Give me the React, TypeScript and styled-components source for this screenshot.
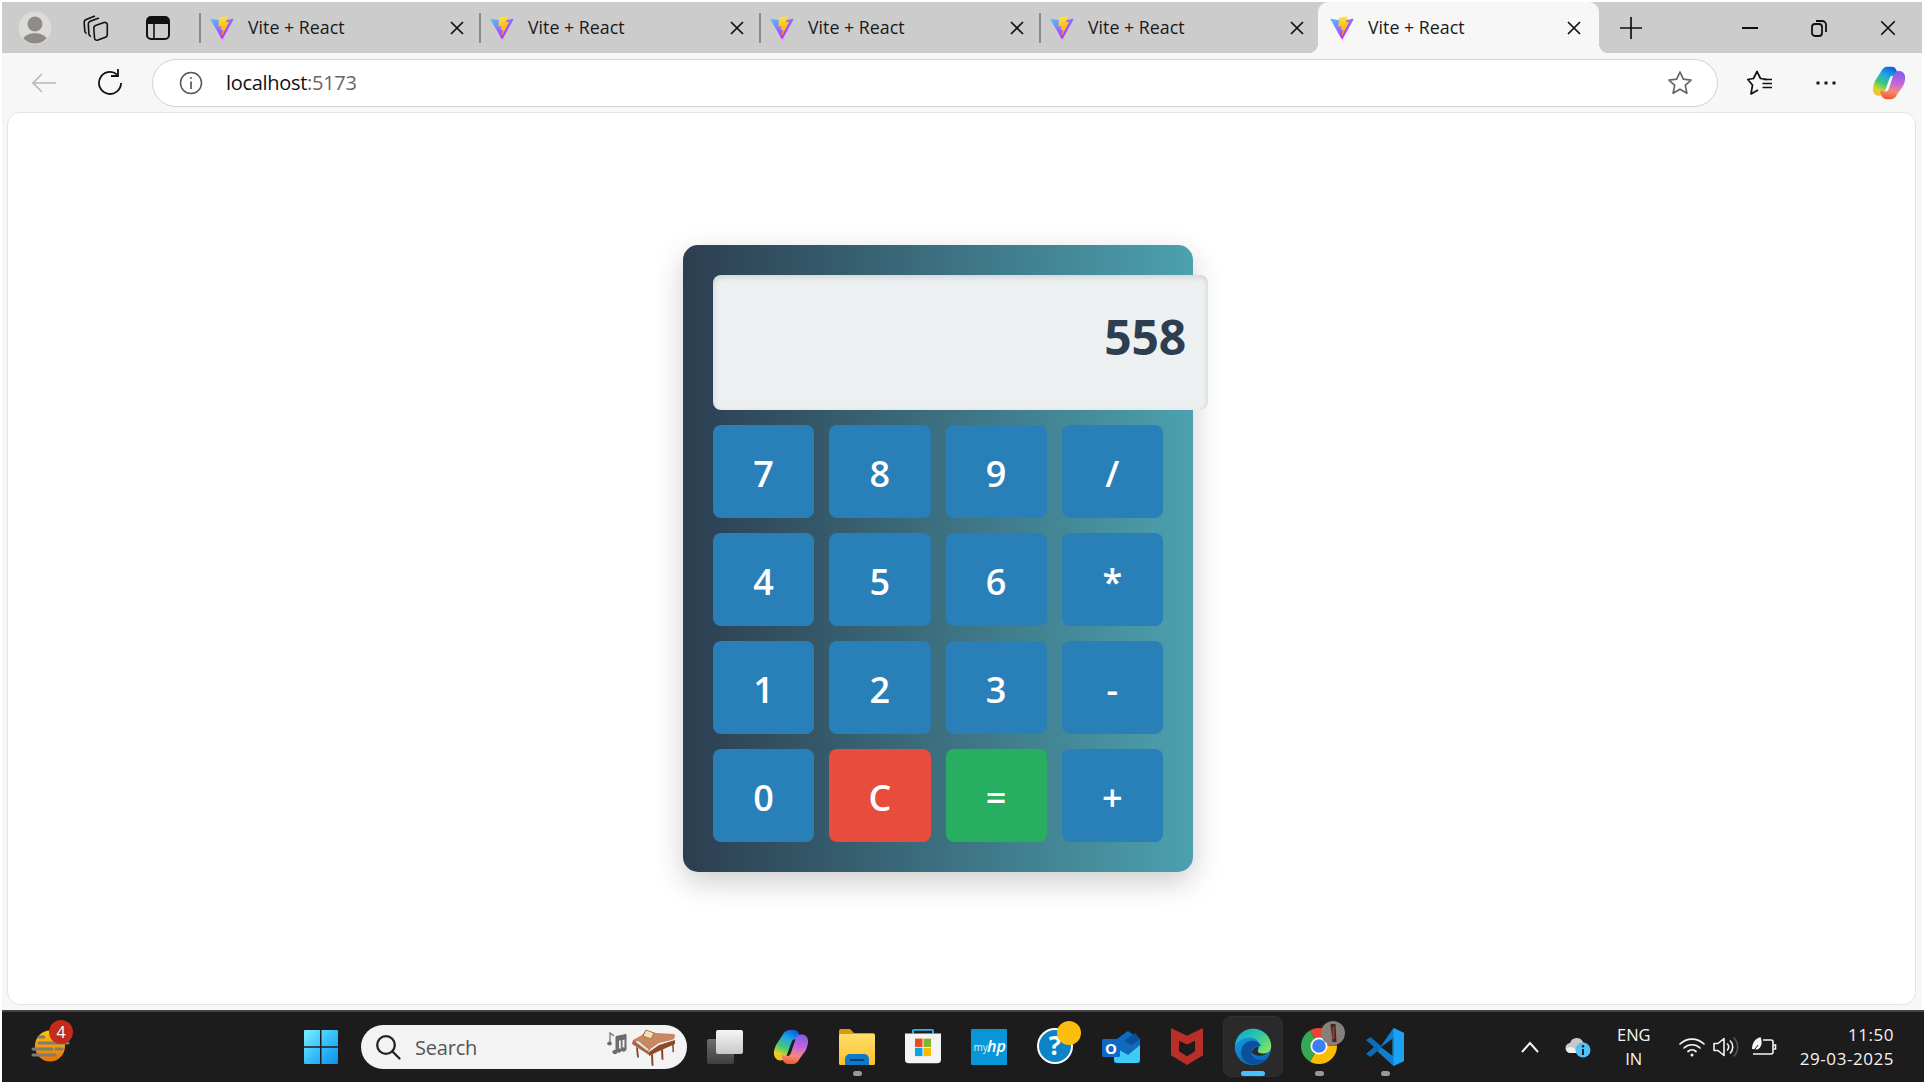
import React, { useId } from "react";
import styled, { createGlobalStyle } from "styled-components";

const Global = createGlobalStyle`
  html, body { margin: 0; padding: 0; background: #fff; }
  body { width: 1924px; height: 1084px; overflow: hidden; font-family: "Open Sans", "Noto Sans", sans-serif; }
  * { box-sizing: border-box; }
`;

const Frame = styled.div`
  width: 1924px; height: 1084px; padding: 2px 0 2px 2px;
  display: flex; flex-direction: column; background: #fff;
`;

/* ---------- tab strip ---------- */
const TabStrip = styled.div`
  height: 51px; flex: none; display: flex; align-items: stretch; background: #cccccc; width: 1920px;
`;
const StripTools = styled.div`
  flex: 0 0 196px; display: flex; align-items: center;
`;
const Slot = styled.div<{ $w: number }>`
  flex: 0 0 ${(p) => p.$w}px; display: flex; align-items: center; justify-content: center;
`;
const Tab = styled.div<{ $active?: boolean }>`
  position: relative; flex: 0 0 ${(p) => (p.$active ? 281 : 280)}px;
  display: flex; align-items: center; padding: 0 ${(p) => (p.$active ? 17 : 13)}px 0 1px;
  color: #1a1a1a; font-size: 17.8px;
  background: ${(p) => (p.$active ? "#f7f7f7" : "transparent")};
  border-radius: 10px 10px 0 0;
  ${(p) =>
    p.$active
      ? `&::before, &::after { content: ""; position: absolute; bottom: 0; width: 10px; height: 10px; }
         &::before { left: -10px; background: radial-gradient(circle at 0 0, #ccc 10px, #f7f7f7 10.5px); }
         &::after { right: -10px; background: radial-gradient(circle at 100% 0, #ccc 10px, #f7f7f7 10.5px); }`
      : ""}
`;
const TabSep = styled.span<{ $hidden?: boolean }>`
  flex: none; width: 2px; height: 30px; background: ${(p) => (p.$hidden ? "transparent" : "#8a8a8a")}; margin-right: 9px;
`;
const TabTitle = styled.span`
  margin-left: 14px; padding-bottom: 2px; flex: 1; white-space: nowrap;
`;
const Spacer = styled.div`
  flex: 1;
`;
const WinControls = styled.div`
  display: flex; align-items: center;
`;

/* ---------- toolbar ---------- */
const Body = styled.div`
  flex: 1; min-height: 0; display: flex; flex-direction: column; background: #f7f7f7; width: 1920px;
`;
const Toolbar = styled.div`
  height: 59px; flex: none; display: flex; align-items: center;
`;
const Address = styled.div`
  flex: 0 0 1566px; height: 48px; margin: 0 9px 0 18px; padding: 0 24px 0 26px;
  display: flex; align-items: center; background: #fff;
  border: 1.5px solid #d2d2d2; border-radius: 24px;
`;
const Url = styled.div`
  margin-left: 23px; flex: 1; font-size: 20px; color: #111; letter-spacing: -0.3px; font-family: "Open Sans", sans-serif;
`;
const Port = styled.span`
  color: #666;
`;

/* ---------- page ---------- */
const PageWrap = styled.div`
  flex: 1; min-height: 0; padding: 0 6px 5px 5px; display: flex;
`;
const Page = styled.main`
  flex: 1; background: #fff; border: 1px solid #e4e4e4; border-radius: 13px;
  display: flex; align-items: center; justify-content: center; padding: 0 47px 1px 0;
`;
const Calculator = styled.div`
  width: 510px; height: 627px; padding: 30px; border-radius: 15px;
  background: linear-gradient(to right, #2c3e50, #4ca1af);
  box-shadow: 0 10px 30px rgba(0, 0, 0, 0.2);
  display: flex; flex-direction: column; gap: 15px;
`;
const Display = styled.div`
  flex: none; width: 495px; height: 135px; padding: 0 22px 12px 20px;
  display: flex; align-items: center; justify-content: flex-end;
  background: #ecf0f1; border-radius: 8px; color: #2c3e50;
  font-family: "Open Sans", sans-serif; font-size: 48px; font-weight: 700; letter-spacing: -0.2px;
  box-shadow: inset 0 2px 6px rgba(0, 0, 0, 0.13);
`;
const Keys = styled.div`
  flex: 1; display: grid; grid-template-columns: repeat(4, 1fr); grid-auto-rows: 93px; gap: 15px;
`;
const Key = styled.button<{ $bg: string }>`
  border: 0; border-radius: 8px; padding: 5px 0 0; color: #fff; background: ${(p) => p.$bg};
  font-family: "Open Sans", sans-serif; font-size: 36px; font-weight: 600;
  display: flex; align-items: center; justify-content: center;
`;

/* ---------- taskbar ---------- */
const Taskbar = styled.footer`
  height: 72px; flex: none; width: 1922px; border-top: 2px solid #444; background: #1c1c1c;
  display: flex; align-items: center; color: #fff;
`;
const WeatherSlot = styled.div`
  flex: 0 0 286px; display: flex; align-items: center; padding-left: 27px;
`;
const Search = styled.div`
  flex: 0 0 326px; height: 44px; margin: 0 5px 0 7px; padding: 0 8px 0 14px; border-radius: 22px; background: #f3f3f3;
  display: flex; align-items: center; color: #555; font-size: 20px;
`;
const SearchLabel = styled.span`
  flex: 1; margin-left: 14px; letter-spacing: -0.2px;
`;
const TaskItem = styled.div<{ $active?: boolean; $dot?: boolean }>`
  position: relative; flex: 0 0 66px; height: 70px; display: flex; align-items: center; justify-content: center;
  padding-bottom: 1px;
  & > svg { position: relative; }
  ${(p) =>
    p.$active
      ? `&::before { content: ""; position: absolute; left: 3px; right: 3px; top: 4px; bottom: 5px; border-radius: 8px; background: #2a2a2a; border: 1px solid #303030; }
         &::after { content: ""; position: absolute; left: 21px; width: 24px; height: 5px; bottom: 6px; border-radius: 3px; background: #47c1ff; }`
      : p.$dot
      ? `&::after { content: ""; position: absolute; left: 29px; width: 9px; height: 5px; bottom: 6px; border-radius: 3px; background: #999; }`
      : ""}
`;
const TrayText = styled.div`
  font-size: 16.5px; line-height: 24px; text-align: center; color: #f4f4f4; flex: none;
`;
const Clock = styled.div`
  flex: none; margin: 0 30px 0 16px; font-size: 17px; line-height: 24px; text-align: right; color: #f4f4f4; letter-spacing: 0.55px;
`;
const SvgText = styled.text<{ $size: number; $w?: number; $i?: boolean }>`
  font-family: "Open Sans", sans-serif; font-size: ${(p) => p.$size}px; font-weight: ${(p) => p.$w ?? 400};
  font-style: ${(p) => (p.$i ? "italic" : "normal")};
`;

/* ---------- icons ---------- */
type S = { size?: number };
const Vite = ({ size = 24 }: S) => {
  const id = useId();
  return (
    <svg width={size} height={size} viewBox="0 0 410 404" fill="none">
      <defs>
        <linearGradient id={id + "a"} x1="6" y1="33" x2="235" y2="344" gradientUnits="userSpaceOnUse">
          <stop stopColor="#41D1FF" /><stop offset="1" stopColor="#BD34FE" />
        </linearGradient>
        <linearGradient id={id + "b"} x1="194" y1="8" x2="236" y2="292" gradientUnits="userSpaceOnUse">
          <stop stopColor="#FFEA83" /><stop offset=".08" stopColor="#FFDD35" /><stop offset="1" stopColor="#FFA800" />
        </linearGradient>
      </defs>
      <path fill={`url(#${id}a)`} d="M399.641 59.5246L215.643 388.545C211.844 395.338 202.084 395.378 198.228 388.618L10.5817 59.5563C6.38087 52.1896 12.6802 43.2665 21.0281 44.7586L205.223 77.6824C206.398 77.8924 207.601 77.8904 208.776 77.6763L389.119 44.8058C397.439 43.2894 403.768 52.1434 399.641 59.5246Z" />
      <path fill={`url(#${id}b)`} d="M292.965 1.5744L156.801 28.2552C154.563 28.6937 152.906 30.5903 152.771 32.8664L144.395 174.33C144.198 177.662 147.258 180.248 150.51 179.498L188.42 170.749C191.967 169.931 195.172 173.055 194.443 176.622L183.18 231.775C182.422 235.487 185.907 238.661 189.532 237.56L212.947 230.446C216.577 229.344 220.065 232.527 219.297 236.242L201.398 322.875C200.278 328.294 207.486 331.249 210.492 326.603L212.5 323.5L323.454 102.072C325.312 98.3645 322.108 94.137 318.036 94.9228L279.014 102.454C275.347 103.161 272.227 99.746 273.262 96.1583L298.731 7.86689C299.767 4.27314 296.636 0.855181 292.965 1.5744Z" />
    </svg>
  );
};
const Cross = ({ size = 16, w = 1.7 }: S & { w?: number }) => (
  <svg width={size} height={size} viewBox="0 0 16 16"><path d="M2 2L14 14M14 2L2 14" stroke="#111" strokeWidth={w} fill="none" /></svg>
);
const Avatar = () => (
  <svg width="34" height="34" viewBox="0 0 34 34">
    <circle cx="17" cy="17" r="16.5" fill="#dcdbd8" />
    <clipPath id="avc"><circle cx="17" cy="17" r="15.5" /></clipPath>
    <g clipPath="url(#avc)" fill="#8f8b86">
      <circle cx="17" cy="13" r="7.5" />
      <ellipse cx="17" cy="31" rx="13" ry="9" />
    </g>
  </svg>
);
const Collections = () => (
  <svg width="28" height="28" viewBox="0 0 28 28" fill="none" stroke="#111" strokeWidth="1.6" strokeLinejoin="round">
    <path d="M13.500 11.500L22 8.500C24 8 25.300 9 25.300 10.800V20.500C25.300 22 24.700 22.800 23.400 23.300L16 26C14 26.600 12.700 25.600 12.500 24L11.800 14C11.700 12.700 12.300 12 13.500 11.500Z" />
    <path d="M9 22.500C7.600 22 7 21 6.900 20L6.300 10C6.200 8.600 7 7.700 8.200 7.200L17 4" />
    <path d="M4.700 19.500C3.400 19 2.900 18 2.800 17L2.200 8.500C2.100 7 3 6 4.200 5.600L13 2" />
  </svg>
);
const PanelIcon = () => (
  <svg width="24" height="24" viewBox="0 0 24 24">
    <rect x="1" y="1" width="22" height="22" rx="4" fill="none" stroke="#111" strokeWidth="2" />
    <path d="M1 5a4 4 0 0 1 4-4h14a4 4 0 0 1 4 4v3H1z" fill="#111" />
    <path d="M8 8v15" stroke="#111" strokeWidth="1.6" />
  </svg>
);
const Plus = () => (
  <svg width="22" height="22" viewBox="0 0 22 22"><path d="M11 0V22M0 11H22" stroke="#111" strokeWidth="1.7" /></svg>
);
const Minimize = () => (
  <svg width="16" height="4" viewBox="0 0 16 4"><path d="M0 2H16" stroke="#111" strokeWidth="2" /></svg>
);
const Restore = () => (
  <svg width="16" height="18" viewBox="0 0 16 18" fill="none" stroke="#111" strokeWidth="1.8">
    <rect x="1" y="5" width="10" height="12" rx="3" />
    <path d="M5 2h6a4 4 0 0 1 4 4v7" />
  </svg>
);
const Back = () => (
  <svg width="26" height="22" viewBox="0 0 26 22" fill="none" stroke="#b9b9b9" strokeWidth="1.7"><path d="M25 11H2M11 2L2 11L11 20" /></svg>
);
const Reload = () => (
  <svg width="26" height="28" viewBox="0 0 26 28" fill="none" stroke="#111" strokeWidth="1.8">
    <path d="M20 5.5A11 11 0 1 0 24 14" />
    <path d="M21 0V7H14" />
  </svg>
);
const Info = () => (
  <svg width="24" height="24" viewBox="0 0 24 24" fill="none" stroke="#555" strokeWidth="1.5">
    <circle cx="12" cy="12" r="10.5" />
    <path d="M12 10.5V18" strokeWidth="1.7" />
    <circle cx="12" cy="7" r="1" fill="#555" stroke="none" />
  </svg>
);
const Star = () => (
  <svg width="26" height="26" viewBox="0 0 26 26" fill="none" stroke="#666" strokeWidth="1.7" strokeLinejoin="round">
    <path d="M13 2l3.3 7.2 7.7.9-5.7 5.3 1.6 7.8L13 19.2l-6.9 4 1.6-7.8L2 10.1l7.7-.9z" />
  </svg>
);
const Favorites = () => (
  <svg width="26" height="26" viewBox="0 0 26 26" fill="none" stroke="#111" strokeWidth="1.7" strokeLinejoin="round">
    <path d="M20 9.500L13.500 8.500L10 1.500L6.500 8.500L0.800 9.500L5.500 15L4 24L11 20" />
    <path d="M16.500 9.500H25M15.500 13.500H25M15.500 17.500H25" />
  </svg>
);
const Dots = () => (
  <svg width="20" height="4" viewBox="0 0 20 4" fill="#222"><circle cx="2" cy="2" r="1.8" /><circle cx="10" cy="2" r="1.8" /><circle cx="18" cy="2" r="1.8" /></svg>
);
const Copilot = ({ size = 34 }: S) => {
  const id = useId();
  return (
    <svg width={size} height={size} viewBox="0 0 40 40">
      <defs>
        <linearGradient id={id + "l"} x1="0.7" y1="0" x2="0.25" y2="1">
          <stop offset="0" stopColor="#0c5fd6" /><stop offset=".3" stopColor="#1fa6e8" /><stop offset=".6" stopColor="#3fc878" /><stop offset=".85" stopColor="#e6d22a" /><stop offset="1" stopColor="#f0c020" />
        </linearGradient>
        <linearGradient id={id + "r"} x1="0.5" y1="0" x2="0.4" y2="1">
          <stop offset="0" stopColor="#7d5ee8" /><stop offset=".4" stopColor="#c562e0" /><stop offset=".72" stopColor="#f58a7a" /><stop offset="1" stopColor="#ee5a2a" />
        </linearGradient>
      </defs>
      <path fill={`url(#${id}l)`} d="M11 6C12 3.5 15 1 18 1h5c3 0 5 1.5 6 4.5l2.5 7-7-1c-2 0-3 1-4 3.5L15 30c-1 3-3.5 5-7 5-4 0-7-3.5-7-8 0-3 1-6 2.5-9.5z" />
      <path fill={`url(#${id}r)`} d="M29 34c-1 3-4 5-7 5h-5c-3 0-5-1.5-6-4.5L9 29l7 1c2 0 3-1 4-3.5L25 11c1-2.5 3-5 7-5 4.500 0 7 3.500 7 8 0 3-1 6-2.500 9.500z" />
    </svg>
  );
};
const Weather = () => (
  <svg width="62" height="62" viewBox="0 0 62 62">
    <defs>
      <linearGradient id="wx" x1="0" y1="0" x2="0" y2="1"><stop offset="0" stopColor="#ffc800" /><stop offset="1" stopColor="#e87200" /></linearGradient>
    </defs>
    <ellipse cx="21" cy="30" rx="15" ry="15.500" fill="url(#wx)" />
    <g stroke="#7c7c7c" strokeWidth="3" strokeLinecap="round">
      <path d="M10 21H15M10 27H39M4 33H23M27 33H33M4 39H26" />
    </g>
    <circle cx="32" cy="16" r="12" fill="#c42b1c" />
    <SvgText $size={16} x="32" y="22" textAnchor="middle" fill="#fff">4</SvgText>
  </svg>
);
const StartIcon = () => (
  <svg width="36" height="36" viewBox="0 0 36 36">
    <defs>
      <linearGradient id="st" x1="0" y1="0" x2="1" y2="1"><stop offset="0" stopColor="#7cf0ff" /><stop offset=".5" stopColor="#38c0fb" /><stop offset="1" stopColor="#0b8fef" /></linearGradient>
    </defs>
    <path fill="url(#st)" d="M1 2a1 1 0 0 1 1-1h15v16.300H1zM18.500 1H34a1 1 0 0 1 1 1v15.300H18.500zM1 18.700h16V35H2a1 1 0 0 1-1-1zM18.500 18.700H35V34a1 1 0 0 1-1 1H18.500z" />
  </svg>
);
const SearchGlass = () => (
  <svg width="26" height="26" viewBox="0 0 26 26" fill="none" stroke="#222" strokeWidth="2.3"><circle cx="11" cy="11" r="8.800" /><path d="M17.500 17.500L24.500 24.500" strokeLinecap="round" /></svg>
);
const Piano = () => (
  <svg width="72" height="40" viewBox="0 0 72 40">
    <g fill="#6b6b6b" stroke="#6b6b6b" strokeWidth="1">
      <path d="M3 16V6l4 3" fill="none" strokeWidth="1.200" /><ellipse cx="2.500" cy="16.500" rx="2" ry="1.500" />
      <path d="M9 9.500l10-2v15l-1 .5V12l-8 1.500V24h-1z" /><path d="M11.500 13v11h-.8V13zM15 12v11h-.7V12z" />
      <ellipse cx="8" cy="25" rx="2.200" ry="1.700" /><ellipse cx="12" cy="23.500" rx="2.200" ry="1.700" /><ellipse cx="16.500" cy="22.500" rx="2.200" ry="1.700" />
    </g>
    <path d="M26 13L35 8l4-5 10 3 18 1c2 1 1 5-2 6l-13 3-10 7-6 1z" fill="#c98860" />
    <path d="M36 9l3-6 8 3-3 6z" fill="#f0e0b8" stroke="#7a4a28" strokeWidth="0.600" />
    <path d="M26 13l16 12v3L25 17z" fill="#b0623c" />
    <path d="M28 15l12 9 3-1-12-10z" fill="#e4e0d8" stroke="#6b4a30" strokeWidth="0.500" />
    <path d="M42 25l10-7 16-5v4l-18 8-8 4z" fill="#8e4a28" />
    <path d="M29 20l2 1 1 10-2-1zM44 28l2-1 .500 12-2-.500zM54 22l2-1 .500 12-2-.500zM65 16l1.600-.600.400 10-1.500-.400z" fill="#8a4a2a" />
  </svg>
);
const TaskView = () => (
  <svg width="36" height="34" viewBox="0 0 36 34">
    <defs>
      <linearGradient id="tvb" x1="0" y1="0" x2="0" y2="1"><stop offset="0" stopColor="#6e6e6e" /><stop offset="1" stopColor="#3f3f3f" /></linearGradient>
      <linearGradient id="tvf" x1="0" y1="0" x2="0" y2="1"><stop offset="0" stopColor="#f6f6f6" /><stop offset="1" stopColor="#c8c8c8" /></linearGradient>
    </defs>
    <rect x="0" y="9" width="27" height="25" rx="2" fill="url(#tvb)" />
    <rect x="9" y="0" width="27" height="24" rx="2" fill="url(#tvf)" />
  </svg>
);
const Files = () => (
  <svg width="36" height="36" viewBox="0 0 36 36">
    <defs>
      <linearGradient id="fl" x1="0" y1="0" x2="0" y2="1"><stop offset="0" stopColor="#ffdf6b" /><stop offset="1" stopColor="#fcc02c" /></linearGradient>
    </defs>
    <path d="M0 2a2 2 0 0 1 2-2h9l4 4h19a2 2 0 0 1 2 2v6H0z" fill="#d99b0c" />
    <rect x="0" y="5" width="36" height="31" rx="1.500" fill="url(#fl)" />
    <path d="M6 36V30a5 5 0 0 1 5-5h14a5 5 0 0 1 5 5v6z" fill="#0f78c9" />
    <path d="M11 31h14" stroke="#063f77" strokeWidth="2" />
  </svg>
);
const Store = () => (
  <svg width="36" height="35" viewBox="0 0 36 40" preserveAspectRatio="none">
    <path d="M8 5V2a1 1 0 0 1 1-1h18a1 1 0 0 1 1 1v3" fill="none" stroke="#2bb4f0" strokeWidth="2" />
    <path d="M0 5h36v30a4 4 0 0 1-4 4H4a4 4 0 0 1-4-4z" fill="#f4f4f4" />
    <rect x="10" y="11" width="7.500" height="9.500" fill="#ea4a20" />
    <rect x="18.500" y="11" width="7.500" height="9.500" fill="#7db72f" />
    <rect x="10" y="21.500" width="7.500" height="9.500" fill="#0aa5e8" />
    <rect x="18.500" y="21.500" width="7.500" height="9.500" fill="#fdb800" />
  </svg>
);
const MyHp = () => (
  <svg width="36" height="36" viewBox="0 0 36 36">
    <rect width="36" height="36" rx="1" fill="#0a96d6" />
    <SvgText $size={10} x="2.500" y="22" fill="#dff2fb">my</SvgText>
    <SvgText $size={16} $w={600} $i x="16" y="23" fill="#fff">hp</SvgText>
  </svg>
);
const Help = () => (
  <svg width="52" height="52" viewBox="0 0 52 52">
    <circle cx="26" cy="25" r="17" fill="#0a84c8" stroke="#fff" strokeWidth="2" />
    <SvgText $size={26} $w={700} x="26" y="34" textAnchor="middle" fill="#fff">?</SvgText>
    <ellipse cx="40" cy="12" rx="12" ry="12" fill="#fdbd0c" />
  </svg>
);
const Outlook = () => (
  <svg width="38" height="32" viewBox="0 0 38 32">
    <path d="M12 10L26 0l12 8v24H12z" fill="#0f6cbd" />
    <path d="M22 10L33 2l5 6-8 6z" fill="#0a4f9a" />
    <path d="M12 16l14 8 12-10v14a4 4 0 0 1-4 4H16a4 4 0 0 1-4-4z" fill="#3fcbf4" />
    <rect x="0" y="8" width="18" height="18" rx="1.500" fill="#1068c4" />
    <SvgText $size={15} $w={700} x="9" y="22.500" textAnchor="middle" fill="#fff">O</SvgText>
  </svg>
);
const McAfee = () => (
  <svg width="32" height="37" viewBox="0 0 32 38" preserveAspectRatio="none">
    <path fillRule="evenodd" fill="#b92f28" d="M0 0l16 8 16-8v28l-16 10L0 28zM8 13v11l8 5 8-5V13l-8 4z" />
  </svg>
);
const Edge = () => (
  <svg width="38" height="38" viewBox="0 0 48 48">
    <defs>
      <linearGradient id="eg" x1="0" y1="0" x2="1" y2="0.700"><stop offset="0" stopColor="#0ea5d8" /><stop offset=".6" stopColor="#33c9a2" /><stop offset="1" stopColor="#7fe45c" /></linearGradient>
      <linearGradient id="eb" x1="0" y1="0" x2="0.500" y2="1"><stop offset="0" stopColor="#1aa2e6" /><stop offset="1" stopColor="#0a6cc0" /></linearGradient>
    </defs>
    <circle cx="24" cy="24" r="23" fill="url(#eb)" />
    <path d="M24 1C37 1 47 11 47 23c0 6-5 9.500-10 9.500-4.500 0-7-1.500-7-3.500 0-1.500 2-2 2-6 0-6-5-11-12-11C12 12 5 16 1.500 22 3 10 12 1 24 1z" fill="url(#eg)" />
    <path d="M19 45C12 43 9 36 9 31c0-8 6-15 14-15 6 0 10 3 11 7-5-1.500-12 1-12 8 0 5 5 9.500 12 9.500 3 0 6-1 8-2-4 5-10 8-18 8z" fill="#0c4f9c" />
    <path d="M30 29c0 2 2.500 3.500 7 3.500 2 0 3.500-.500 5.500-1.500-2 3-7 4-11 4s-7-2-9-4c0-3 3-6.500 8-8z" fill="#2a2a2a" />
  </svg>
);
const Chrome = () => (
  <svg width="52" height="52" viewBox="0 0 52 52">
    <clipPath id="cc"><circle cx="26" cy="25" r="18" /></clipPath>
    <g clipPath="url(#cc)">
      <path d="M26 25L6-10L66 25z" fill="#ea4335" />
      <path d="M26 25L66 25L6 60z" fill="#fbbc05" />
      <path d="M26 25L6 60L6-10z" fill="#34a853" />
    </g>
    <circle cx="26" cy="25" r="8.500" fill="#fff" />
    <circle cx="26" cy="25" r="6.800" fill="#3b7ff0" />
    <circle cx="40" cy="12" r="12" fill="#85817a" />
    <path d="M37.500 3h5l1 18h-4z" fill="#3c2a26" />
    <path d="M39.500 6h2v12h-2z" fill="#a53a33" />
  </svg>
);
const VSCode = () => (
  <svg width="38" height="38" viewBox="0 0 38 38">
    <path d="M27.500 0L38 5v28l-10.500 5L10 22l5-4z" fill="#0f7fd0" />
    <path d="M27.500 0L38 5v28l-10.500 5z" fill="#1da1f2" />
    <path d="M27.500 28L12 15.500 4.500 9 0 12l8 7-8 7 4.500 3L12 22.500 15 20z" fill="#0a6db8" />
    <path d="M27.500 10L15 19l12.500 9.500z" fill="#1c1c1c" />
    <path d="M27.500 10v18.500l-1-.500V11z" fill="#1da1f2" />
  </svg>
);
const Chevron = () => (
  <svg width="18" height="12" viewBox="0 0 18 12" fill="none" stroke="#f5f5f5" strokeWidth="2"><path d="M1 11L9 2l8 9" /></svg>
);
const CloudInfo = () => (
  <svg width="26" height="22" viewBox="0 0 26 22">
    <path d="M6 17a5 5 0 0 1-1-10 7 7 0 0 1 13-1 5 5 0 0 1 2 5v6z" fill="#c8c8c8" />
    <path d="M1 13c3-3 8-3 12 4H6a5 5 0 0 1-5-4z" fill="#f0f0f0" />
    <circle cx="18" cy="14" r="7.500" fill="#4fc1f5" />
    <path d="M18 13v6" stroke="#123" strokeWidth="2" /><circle cx="18" cy="10.300" r="1.200" fill="#123" />
  </svg>
);
const Wifi = () => (
  <svg width="26" height="20" viewBox="0 0 26 20" fill="none" stroke="#f5f5f5" strokeWidth="1.700" strokeLinecap="round">
    <path d="M1 7a17 17 0 0 1 24 0M5 11a11.500 11.500 0 0 1 16 0M9 14.500a6 6 0 0 1 8 0" />
    <circle cx="13" cy="18" r="1.500" fill="#f5f5f5" stroke="none" />
  </svg>
);
const Speaker = () => (
  <svg width="26" height="22" viewBox="0 0 26 22" fill="none" stroke="#f5f5f5" strokeWidth="1.600" strokeLinejoin="round">
    <path d="M1 7.500h4L11 2.500v17L5 14.500H1z" />
    <path d="M14 7.500a4.500 4.500 0 0 1 0 7M17 4.500a9 9 0 0 1 0 13" />
    <path d="M20.500 1.500a13 13 0 0 1 0 19" stroke="#555" />
  </svg>
);
const Battery = () => (
  <svg width="26" height="22" viewBox="0 0 26 22" fill="none" stroke="#f5f5f5" strokeWidth="1.600">
    <path d="M12 4h8a2 2 0 0 1 2 2v10a2 2 0 0 1-2 2H2" />
    <path d="M22.500 9h2v4h-2" />
    <path d="M1 13C1 6 5 2.500 9.500 1c2 5 1.500 10-3 12.500z" fill="#f5f5f5" stroke="none" />
    <path d="M1 17l6-8" stroke="#1c1c1c" strokeWidth="1" />
  </svg>
);

const KEY_BLUE = "#2980b9";
const keys: { k: string; bg: string }[] = [
  ..."789/456*123-".split("").map((k) => ({ k, bg: KEY_BLUE })),
  { k: "0", bg: KEY_BLUE },
  { k: "C", bg: "#e74c3c" },
  { k: "=", bg: "#27ae60" },
  { k: "+", bg: KEY_BLUE },
];

const tabs = [0, 1, 2, 3, 4];

export default function App() {
  return (
    <Frame>
      <Global />
      <TabStrip>
        <StripTools>
          <Slot $w={66}><Avatar /></Slot>
          <Slot $w={56}><Collections /></Slot>
          <Slot $w={68}><PanelIcon /></Slot>
        </StripTools>
        {tabs.map((t) => (
          <Tab key={t} $active={t === 4}>
            <TabSep $hidden={t === 4} />
            <Vite />
            <TabTitle>Vite + React</TabTitle>
            <Cross />
          </Tab>
        ))}
        <Slot $w={64}><Plus /></Slot>
        <Spacer />
        <WinControls>
          <Slot $w={69}><Minimize /></Slot>
          <Slot $w={69}><Restore /></Slot>
          <Slot $w={69}><Cross size={18} w={1.5} /></Slot>
        </WinControls>
      </TabStrip>
      <Body>
        <Toolbar>
          <Slot $w={84}><Back /></Slot>
          <Slot $w={48}><Reload /></Slot>
          <Address>
            <Info />
            <Url>localhost<Port>:5173</Port></Url>
            <Star />
          </Address>
          <Slot $w={66}><Favorites /></Slot>
          <Slot $w={66}><Dots /></Slot>
          <Slot $w={60}><Copilot /></Slot>
        </Toolbar>
        <PageWrap>
          <Page>
            <Calculator>
              <Display>558</Display>
              <Keys>
                {keys.map(({ k, bg }) => (
                  <Key key={k} $bg={bg}>{k}</Key>
                ))}
              </Keys>
            </Calculator>
          </Page>
        </PageWrap>
      </Body>
      <Taskbar>
        <WeatherSlot><Weather /></WeatherSlot>
        <Slot $w={66}><StartIcon /></Slot>
        <Search>
          <SearchGlass />
          <SearchLabel>Search</SearchLabel>
          <Piano />
        </Search>
        <TaskItem><TaskView /></TaskItem>
        <TaskItem><Copilot size={36} /></TaskItem>
        <TaskItem $dot><Files /></TaskItem>
        <TaskItem><Store /></TaskItem>
        <TaskItem><MyHp /></TaskItem>
        <TaskItem><Help /></TaskItem>
        <TaskItem><Outlook /></TaskItem>
        <TaskItem><McAfee /></TaskItem>
        <TaskItem $active><Edge /></TaskItem>
        <TaskItem $dot><Chrome /></TaskItem>
        <TaskItem $dot><VSCode /></TaskItem>
        <Spacer />
        <Slot $w={68}><Chevron /></Slot>
        <Slot $w={28}><CloudInfo /></Slot>
        <Slot $w={84}><TrayText>ENG<br />IN</TrayText></Slot>
        <Slot $w={32}><Wifi /></Slot>
        <Slot $w={36}><Speaker /></Slot>
        <Slot $w={40}><Battery /></Slot>
        <Clock>11:50<br />29-03-2025</Clock>
      </Taskbar>
    </Frame>
  );
}
